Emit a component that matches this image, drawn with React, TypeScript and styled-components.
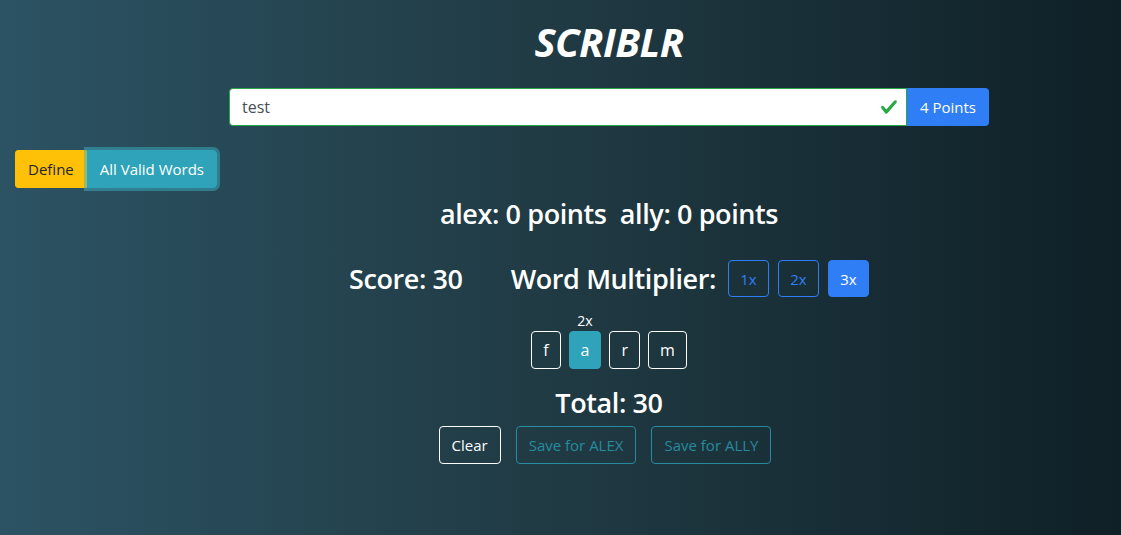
import React from "react";
import styled, { createGlobalStyle } from "styled-components";

const Global = createGlobalStyle`
  html, body { margin: 0; padding: 0; }
  body {
    font-family: "Open Sans", "Noto Sans", sans-serif;
    color: #fff;
    background: linear-gradient(to left, #0f2027, #203a43, #2c5364);
    min-height: 535px;
    overflow: hidden;
  }
  * { box-sizing: border-box; }
`;

const Page = styled.div`
  width: 1121px;
  height: 535px;
  display: flex;
  flex-direction: column;
  overflow: hidden;
`;

const Centered = styled.div<{ $mt?: number }>`
  display: flex;
  flex-direction: column;
  align-items: center;
  padding-left: 97px;
  margin-top: ${(p) => p.$mt ?? 0}px;
`;

const Title = styled.h1`
  margin: 18px 0 0;
  font-size: 40px;
  line-height: 48px;
  font-style: italic;
  font-weight: 700;
  letter-spacing: -0.5px;
`;

const InputGroup = styled.div`
  display: flex;
  width: 760px;
  height: 38px;
`;

const InputWrap = styled.div`
  position: relative;
  flex: 1;
  display: flex;
`;

const Input = styled.input`
  flex: 1;
  height: 38px;
  border: 1px solid #28a745;
  border-radius: 4px 0 0 4px;
  padding: 6px 40px 6px 12px;
  font: 16px "Open Sans", sans-serif;
  color: #495057;
  background: #fff;
  outline: none;
`;

const Check = styled.svg`
  position: absolute;
  right: 9px;
  top: 10px;
  width: 18px;
  height: 18px;
`;

const Append = styled.div`
  display: flex;
  align-items: center;
  padding: 0 13px;
  background: #2f7ef6;
  color: #fff;
  font-size: 15px;
  border-radius: 0 4px 4px 0;
`;

const Toolbar = styled.div`
  display: flex;
  padding-left: 15px;
  margin-top: 24px;
`;

const Btn = styled.button<{ $bg: string; $fg: string; $focus?: boolean; $left?: boolean }>`
  height: 38px;
  padding: 0 12px;
  border: 1px solid ${(p) => p.$bg};
  background: ${(p) => p.$bg};
  color: ${(p) => p.$fg};
  font: 15px "Open Sans", sans-serif;
  border-radius: ${(p) => (p.$left ? "3px 0 0 3px" : "0 4px 4px 0")};
  box-shadow: ${(p) => (p.$focus ? "0 0 0 3px rgba(58,176,195,.5)" : "none")};
  position: relative;
  z-index: ${(p) => (p.$focus ? 1 : 0)};
`;

const Heading = styled.div<{ $mt?: number }>`
  font-size: 27px;
  font-weight: 600;
  line-height: 34px;
  margin-top: ${(p) => p.$mt ?? 0}px;
  white-space: pre;
  letter-spacing: -0.4px;
`;

const ScoreRow = styled.div`
  display: flex;
  align-items: center;
  margin-top: 29px;
  gap: 9px;
`;

const ScoreLabel = styled(Heading)`
  margin-right: 39px;
`;

const MultLabel = styled(Heading)`
  margin-right: 3px;
`;

const MultBtn = styled.button<{ $active?: boolean }>`
  height: 37px;
  width: 41px;
  padding: 0;
  border: 1px solid #2f7ef6;
  background: ${(p) => (p.$active ? "#2f7ef6" : "transparent")};
  color: ${(p) => (p.$active ? "#fff" : "#2f7ef6")};
  font: 15px "Open Sans", sans-serif;
  border-radius: 4px;
`;

const LetterRow = styled.div`
  display: flex;
  align-items: flex-end;
  gap: 8px;
  margin-top: 14px;
`;

const LetterCol = styled.div`
  display: flex;
  flex-direction: column;
  align-items: center;
`;

const LetterLabel = styled.div`
  font-size: 14px;
  line-height: 20px;
`;

const Tile = styled.div<{ $active?: boolean }>`
  height: 38px;
  padding: 0 11px;
  display: flex;
  align-items: center;
  border: 1px solid ${(p) => (p.$active ? "#2fa3b9" : "#fff")};
  background: ${(p) => (p.$active ? "#2fa3b9" : "transparent")};
  border-radius: 4px;
  font-size: 16px;
  color: #fff;
`;

const ActionRow = styled.div`
  display: flex;
  gap: 15px;
  margin-top: 6px;
  margin-left: -8px;
`;

const ActionBtn = styled.button<{ $color: string; $dim?: boolean }>`
  height: 38px;
  padding: 0 12px;
  border: 1px solid ${(p) => p.$color};
  background: transparent;
  color: ${(p) => p.$color};
  opacity: ${(p) => (p.$dim ? 0.8 : 1)};
  font: 15px "Open Sans", sans-serif;
  border-radius: 4px;
`;

const letters = [
  { ch: "f" },
  { ch: "a", mult: "2x" },
  { ch: "r" },
  { ch: "m" },
];

export default function App() {
  return (
    <Page>
      <Global />
      <Centered>
        <Title>SCRIBLR</Title>
      </Centered>
      <Centered $mt={22}>
        <InputGroup>
          <InputWrap>
            <Input defaultValue="test" />
            <Check viewBox="0 0 8 8">
              <path
                fill="#28a745"
                d="M2.3 6.73L.6 4.53c-.4-1.04.46-1.4 1.1-.8l1.1 1.4 3.4-3.8c.6-.63 1.6-.27 1.2.7l-4 4.6c-.43.5-.8.4-1.1.1z"
              />
            </Check>
          </InputWrap>
          <Append>4 Points</Append>
        </InputGroup>
      </Centered>
      <Toolbar>
        <Btn $bg="#ffc107" $fg="#212529" $left>
          Define
        </Btn>
        <Btn $bg="#2fa3b9" $fg="#fff" $focus>
          All Valid Words
        </Btn>
      </Toolbar>
      <Centered>
        <Heading $mt={9}>{"alex: 0 points  ally: 0 points"}</Heading>
        <ScoreRow>
          <ScoreLabel>Score: 30</ScoreLabel>
          <MultLabel>Word Multiplier:</MultLabel>
          <MultBtn>1x</MultBtn>
          <MultBtn>2x</MultBtn>
          <MultBtn $active>3x</MultBtn>
        </ScoreRow>
        <LetterRow>
          {letters.map((l) => (
            <LetterCol key={l.ch}>
              {l.mult && <LetterLabel>{l.mult}</LetterLabel>}
              <Tile $active={!!l.mult}>{l.ch}</Tile>
            </LetterCol>
          ))}
        </LetterRow>
        <Heading $mt={17}>Total: 30</Heading>
        <ActionRow>
          <ActionBtn $color="#ffffff">Clear</ActionBtn>
          <ActionBtn $color="#2aa0b5" $dim>Save for ALEX</ActionBtn>
          <ActionBtn $color="#2aa0b5" $dim>Save for ALLY</ActionBtn>
        </ActionRow>
      </Centered>
    </Page>
  );
}
